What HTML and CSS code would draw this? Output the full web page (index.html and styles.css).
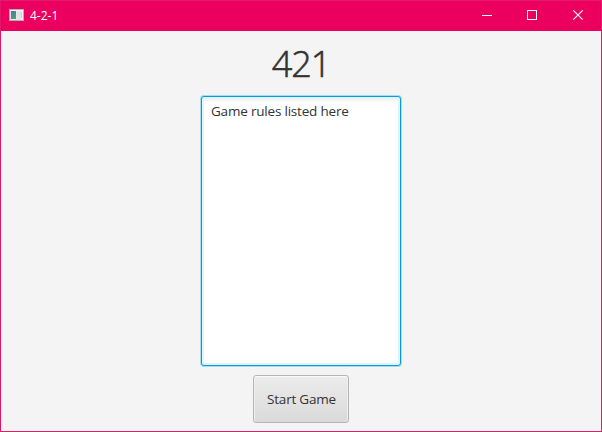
FILE: index.html
```html
<!DOCTYPE html>
<html lang="en">
<head>
<meta charset="utf-8">
<title>4-2-1</title>
<link rel="stylesheet" href="styles.css">
</head>
<body>
<div class="window">
  <header class="titlebar">
    <svg class="app-icon" width="15" height="12" viewBox="0 0 15 12">
      <defs><linearGradient id="pane" x1="0" y1="0" x2="0.6" y2="1"><stop offset="0" stop-color="#4675a8"/><stop offset="1" stop-color="#48a37d"/></linearGradient></defs>
      <rect width="15" height="12" fill="#b9adb0"/>
      <rect x="1" y="1" width="13" height="10" fill="#f5f5f5"/>
      <rect x="1" y="2" width="7" height="9" fill="#e5e8e8"/>
      <rect x="2" y="2" width="5" height="8" fill="url(#pane)"/>
      <rect x="8" y="2" width="4" height="9" fill="#e0e4e4"/>
      <rect x="12" y="3" width="1" height="6" fill="#c8cccc"/>
    </svg>
    <span class="title">4-2-1</span>
    <div class="controls">
      <svg width="46" height="30" viewBox="0 0 46 30"><path d="M12 15.5H22" stroke="#fff"/></svg>
      <svg width="46" height="30" viewBox="0 0 46 30"><rect x="11.5" y="10.5" width="9" height="9" fill="none" stroke="#fff"/></svg>
      <svg width="40" height="30" viewBox="0 0 40 30"><path d="M11.3 10.3L20.7 19.7M20.7 10.3L11.3 19.7" stroke="#fff" stroke-width="1.15"/></svg>
    </div>
  </header>
  <main class="content">
    <h1 class="heading">421</h1>
    <div class="rules"><span class="rules-text">Game rules listed here</span></div>
    <button class="start"><span class="start-text">Start Game</span></button>
  </main>
</div>
</body>
</html>
```

FILE: styles.css
```css
* { box-sizing: border-box; }
body { margin: 0; overflow: hidden; font-family: "Open Sans", "Noto Sans", sans-serif; color: #333; }
.window {
  display: flex;
  flex-direction: column;
  width: 602px;
  height: 432px;
  border: 1px solid #d92068;
  border-top-color: #e51a6a;
  border-left-color: #e51467;
  background: #f4f4f4;
}
.titlebar {
  display: flex;
  align-items: center;
  flex: 0 0 30px;
  padding-left: 8px;
  background: #ec005f;
  color: #fff;
}
.app-icon { margin-top: -2px; }
.title { margin-left: 6px; font-size: 12px; line-height: 16px; }
.controls { display: flex; margin-left: auto; margin-right: -1px; }
.controls svg { display: block; margin-top: -2px; }
.content { display: flex; flex-direction: column; align-items: center; flex: 1; }
.heading {
  margin: 8px 0 0;
  height: 57px;
  font-size: 36px;
  line-height: 50px;
  font-weight: 350;
  letter-spacing: -1px;
  -webkit-text-stroke: 0.6px #333;
}
.rules {
  width: 200px;
  height: 270px;
  padding: 5px 9px;
  border: 1px solid #039ed3;
  border-radius: 3px;
  background: #fff;
  box-shadow: 0 0 0 1px #a5dcee, inset 0 0 0 2px #e2f3f9, inset 0 3px 4px #ececec;
}
.rules-text { display: block; font-size: 13.5px; line-height: 18px; letter-spacing: -0.2px; white-space: nowrap; }
.start {
  width: 96px;
  height: 48px;
  margin-top: 9px;
  padding: 0 0 0 1px;
  border: 1px solid #b5b5b5;
  border-radius: 3px;
  background: linear-gradient(#ececec, #dadada);
  box-shadow: inset 0 1px #fbfbfb, inset 1px 0 #eee, inset -1px 0 #eee;
  font: 13.5px/18px "Open Sans", "Noto Sans", sans-serif;
  color: #333;
}
.start-text { display: block; letter-spacing: -0.2px; white-space: nowrap; }
```
